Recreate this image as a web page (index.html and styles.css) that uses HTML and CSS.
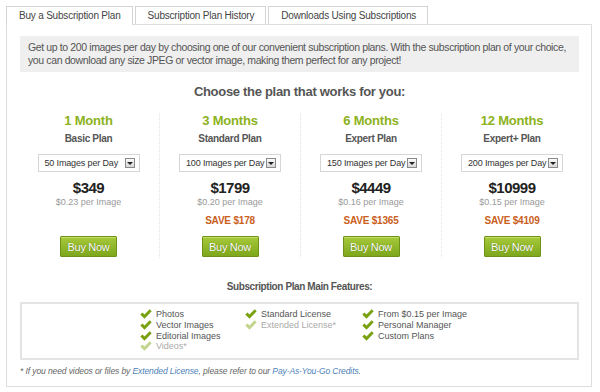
FILE: index.html
```html
<!DOCTYPE html>
<html lang="en">
<head>
  <meta charset="UTF-8">
  <title>Subscription Plans</title>
  <link rel="stylesheet" href="styles.css">
</head>
<body>
  <div class="page">
    <div class="tabs">
      <div class="tab active">Buy a Subscription Plan</div>
      <div class="tab">Subscription Plan History</div>
      <div class="tab">Downloads Using Subscriptions</div>
    </div>

    <div class="panel">
      <div class="intro">
        Get up to 200 images per day by choosing one of our convenient subscription plans. With the subscription plan of your choice,
        you can download any size JPEG or vector image, making them perfect for any project!
      </div>

      <h2 class="title">Choose the plan that works for you:</h2>

      <div class="plans">
        <div class="plan">
          <div class="months">1 Month</div>
          <div class="name">Basic Plan</div>
          <div class="select"><span>50 Images per Day</span><i class="arrow"></i></div>
          <div class="price">$349</div>
          <div class="per">$0.23 per Image</div>
          <div class="save"></div>
          <button class="buy">Buy Now</button>
        </div>
        <div class="plan">
          <div class="months">3 Months</div>
          <div class="name">Standard Plan</div>
          <div class="select"><span>100 Images per Day</span><i class="arrow"></i></div>
          <div class="price">$1799</div>
          <div class="per">$0.20 per Image</div>
          <div class="save">SAVE $178</div>
          <button class="buy">Buy Now</button>
        </div>
        <div class="plan">
          <div class="months">6 Months</div>
          <div class="name">Expert Plan</div>
          <div class="select"><span>150 Images per Day</span><i class="arrow"></i></div>
          <div class="price">$4449</div>
          <div class="per">$0.16 per Image</div>
          <div class="save">SAVE $1365</div>
          <button class="buy">Buy Now</button>
        </div>
        <div class="plan">
          <div class="months">12 Months</div>
          <div class="name">Expert+ Plan</div>
          <div class="select"><span>200 Images per Day</span><i class="arrow"></i></div>
          <div class="price">$10999</div>
          <div class="per">$0.15 per Image</div>
          <div class="save">SAVE $4109</div>
          <button class="buy">Buy Now</button>
        </div>
      </div>

      <h3 class="features-title">Subscription Plan Main Features:</h3>

      <div class="features">
        <ul>
          <li><svg viewBox="0 0 12 10"><path d="M0.3 5.4 L2.5 3.5 L4.5 5.6 L9.7 0.3 L11.7 2.2 L4.5 9.7 Z"/></svg>Photos</li>
          <li><svg viewBox="0 0 12 10"><path d="M0.3 5.4 L2.5 3.5 L4.5 5.6 L9.7 0.3 L11.7 2.2 L4.5 9.7 Z"/></svg>Vector Images</li>
          <li><svg viewBox="0 0 12 10"><path d="M0.3 5.4 L2.5 3.5 L4.5 5.6 L9.7 0.3 L11.7 2.2 L4.5 9.7 Z"/></svg>Editorial Images</li>
          <li class="off"><svg viewBox="0 0 12 10"><path d="M0.3 5.4 L2.5 3.5 L4.5 5.6 L9.7 0.3 L11.7 2.2 L4.5 9.7 Z"/></svg>Videos*</li>
        </ul>
        <ul>
          <li><svg viewBox="0 0 12 10"><path d="M0.3 5.4 L2.5 3.5 L4.5 5.6 L9.7 0.3 L11.7 2.2 L4.5 9.7 Z"/></svg>Standard License</li>
          <li class="off"><svg viewBox="0 0 12 10"><path d="M0.3 5.4 L2.5 3.5 L4.5 5.6 L9.7 0.3 L11.7 2.2 L4.5 9.7 Z"/></svg>Extended License*</li>
        </ul>
        <ul>
          <li><svg viewBox="0 0 12 10"><path d="M0.3 5.4 L2.5 3.5 L4.5 5.6 L9.7 0.3 L11.7 2.2 L4.5 9.7 Z"/></svg>From $0.15 per Image</li>
          <li><svg viewBox="0 0 12 10"><path d="M0.3 5.4 L2.5 3.5 L4.5 5.6 L9.7 0.3 L11.7 2.2 L4.5 9.7 Z"/></svg>Personal Manager</li>
          <li><svg viewBox="0 0 12 10"><path d="M0.3 5.4 L2.5 3.5 L4.5 5.6 L9.7 0.3 L11.7 2.2 L4.5 9.7 Z"/></svg>Custom Plans</li>
        </ul>
      </div>

      <p class="note">* If you need videos or files by <a href="#">Extended License</a>, please refer to our <a href="#">Pay-As-You-Go Credits</a>.</p>
    </div>
  </div>
</body>
</html>
```

FILE: styles.css
```css
body {
  margin: 0;
  font-family: "Liberation Sans", Arial, sans-serif;
  background: #fff;
  color: #555;
}

.page {
  padding: 6px 8px 0 6px;
}

.tabs {
  display: flex;
  gap: 2px;
}

.tab {
  height: 17px;
  line-height: 18px;
  padding: 0 11px 0 12px;
  font-size: 10px;
  letter-spacing: -0.2px;
  color: #444;
  border: 1px solid #d4d4d4;
  border-bottom: none;
  background: #fff;
}

.tab.active {
  position: relative;
  z-index: 1;
  height: 18px;
  margin-bottom: -1px;
}

.panel {
  border: 1px solid #ddd;
  height: 363px;
  padding: 11px 12px 0 13px;
  box-sizing: border-box;
}

.intro {
  background: #efefef;
  padding: 5px 3px 5px 8px;
  font-size: 10.5px;
  letter-spacing: -0.38px;
  line-height: 13px;
  color: #555;
}

.title {
  margin: 11px 0 0;
  text-align: center;
  font-size: 13px;
  letter-spacing: -0.3px;
  line-height: 18px;
  color: #555;
}

.plans {
  display: grid;
  grid-template-columns: repeat(4, 141px);
  margin: 12px 0 0 -2px;
}

.plan {
  display: flex;
  flex-direction: column;
  align-items: center;
  padding-bottom: 1px;
}

.plan + .plan {
  border-left: 1px dotted #e3e3e3;
}

.months {
  font-size: 13px;
  font-weight: bold;
  letter-spacing: -0.2px;
  line-height: 16px;
  color: #8cb21c;
}

.name {
  margin-top: 4px;
  font-size: 10px;
  font-weight: bold;
  letter-spacing: -0.3px;
  line-height: 12px;
  color: #555;
}

.select {
  display: flex;
  align-items: center;
  justify-content: space-between;
  width: 102px;
  height: 18px;
  margin-top: 9px;
  padding: 0 4px 0 6px;
  box-sizing: border-box;
  border: 1px solid #d6d6d6;
  font-size: 9px;
  letter-spacing: -0.15px;
  color: #333;
}

.arrow {
  position: relative;
  width: 8px;
  height: 8px;
  border: 1px solid #8a8a8a;
  background: linear-gradient(#fafafa, #d8d8d8);
}

.arrow::after {
  content: "";
  position: absolute;
  left: 1px;
  top: 3px;
  border: 3px solid transparent;
  border-top: 3px solid #222;
  border-bottom: none;
}

.price {
  margin-top: 7px;
  font-size: 15px;
  font-weight: bold;
  letter-spacing: -0.5px;
  line-height: 18px;
  color: #222;
}

.per {
  font-size: 9px;
  line-height: 10px;
  color: #9a9a9a;
}

.save {
  height: 12px;
  margin-top: 8px;
  font-size: 10px;
  font-weight: bold;
  letter-spacing: -0.2px;
  line-height: 12px;
  color: #c9601c;
}

.buy {
  width: 57px;
  height: 21px;
  margin-top: 9px;
  padding: 0;
  font-family: inherit;
  font-size: 11px;
  letter-spacing: -0.3px;
  color: #fff;
  text-shadow: 0 0 1px #4d6a0a;
  border: 1px solid #6e9217;
  border-radius: 1px;
  background: linear-gradient(#a6c93a, #7ea71c);
  box-shadow: inset 0 1px 0 #c2de67;
}

.features-title {
  margin: 23px 0 0;
  text-align: center;
  font-size: 10px;
  letter-spacing: -0.4px;
  line-height: 12px;
  color: #555;
}

.features {
  display: flex;
  margin-top: 9px;
  height: 58px;
  box-sizing: border-box;
  padding: 5px 0 0 118px;
  border: 2px solid #e4e4e4;
}

.features ul {
  list-style: none;
  margin: 0;
  padding: 0;
  width: 105px;
}

.features ul + ul {
  width: 117px;
}

.features li {
  display: flex;
  align-items: center;
  gap: 4px;
  height: 10.67px;
  font-size: 9px;
  color: #555;
}

.features svg {
  width: 12px;
  height: 10px;
  fill: #79a00f;
}

.features li.off {
  color: #aaa;
}

.features li.off svg {
  fill: #c3d58c;
}

.note {
  margin: 6px 0 0;
  font-size: 8.5px;
  font-style: italic;
  letter-spacing: -0.1px;
  line-height: 10px;
  color: #666;
}

.note a {
  color: #4d7fb8;
  text-decoration: none;
}
```
